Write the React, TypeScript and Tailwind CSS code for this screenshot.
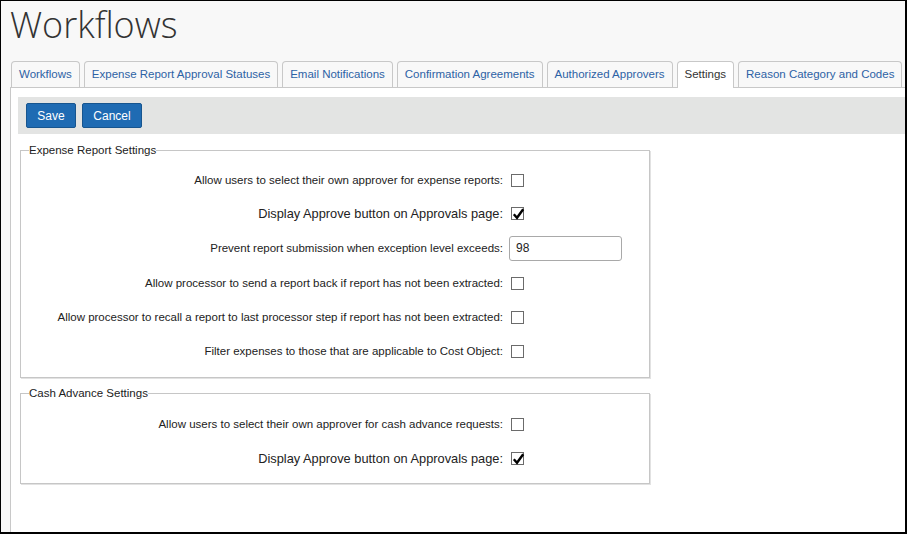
import React from "react";

const tabs = [
  "Workflows",
  "Expense Report Approval Statuses",
  "Email Notifications",
  "Confirmation Agreements",
  "Authorized Approvers",
  "Settings",
  "Reason Category and Codes",
];

function Check({ checked }: { checked?: boolean }) {
  return (
    <span className="relative inline-block w-[13px] h-[13px] border border-[#6b6b6b] bg-white">
      {checked && (
        <svg
          className="absolute left-[0px] top-[-1px]"
          width="13"
          height="14"
          viewBox="0 0 13 14"
        >
          <path d="M1.8 7.2 L5 10.8 L11.2 2.3" fill="none" stroke="#000" strokeWidth="2.4" />
        </svg>
      )}
    </span>
  );
}

function Row({
  label,
  h,
  big,
  children,
}: {
  label: string;
  h: string;
  big?: boolean;
  children: React.ReactNode;
}) {
  return (
    <div className={`flex items-center ${h}`}>
      <div
        className={
          big
            ? "w-[482px] text-right text-[12.8px] text-[#222] leading-[15px] whitespace-nowrap"
            : "w-[482px] text-right text-[11.5px] text-[#222] leading-[14px] whitespace-nowrap"
        }
      >
        {label}
      </div>
      {children}
    </div>
  );
}

export default function App() {
  return (
    <div
      className="w-[907px] h-[534px] border-l border-t border-r-2 border-b-2 border-black bg-[#f8f8f8] flex flex-col overflow-hidden"
      style={{ fontFamily: '"Liberation Sans", Arial, sans-serif' }}
    >
      <h1
        className="h-[52px] pl-[9px] text-[36px] leading-[47px] font-light text-[#333]"
        style={{ fontFamily: '"Open Sans", sans-serif' }}
      >
        Workflows
      </h1>
      <div className="mt-[8px] flex items-end pl-[10px] gap-[4px]">
        {tabs.map((t) => {
          const active = t === "Settings";
          return (
            <div
              key={t}
              className={
                active
                  ? "relative -mb-px h-[27px] px-[7px] pb-[1px] shrink-0 whitespace-nowrap flex items-center border border-b-0 border-[#c8c8c8] rounded-t-[4px] bg-white text-[11.5px] text-[#333]"
                  : "h-[26px] px-[7px] shrink-0 whitespace-nowrap flex items-center border border-b-0 border-[#c8c8c8] rounded-t-[4px] bg-[#f8f8f8] text-[11.5px] text-[#2d62a5]"
              }
            >
              {t}
            </div>
          );
        })}
      </div>
      <div className="flex-1 ml-[9px] bg-white border-t border-l border-[#c8c8c8]">
        <div className="mt-[9px] ml-[7px] h-[37px] bg-[#e3e4e3] flex items-center pl-[8px] gap-[6px]">
          <button className="w-[50px] h-[25px] rounded-[2px] border border-[#17558f] bg-[#1f6bb3] text-white text-[12px]">
            Save
          </button>
          <button className="w-[60px] h-[25px] rounded-[2px] border border-[#17558f] bg-[#1f6bb3] text-white text-[12px]">
            Cancel
          </button>
        </div>

        <fieldset className="mt-[9px] ml-[9px] w-[630px] border border-[#c6c6c6] shadow-[1px_1px_0_#e2e2e2] pt-[6px] pb-[9px]">
          <legend className="ml-[8px] text-[11.5px] leading-[14px] text-[#222]">Expense Report Settings</legend>
          <Row label="Allow users to select their own approver for expense reports:" h="h-[34px]">
            <span className="ml-[8px] flex"><Check /></span>
          </Row>
          <Row label="Display Approve button on Approvals page:" h="h-[33px]" big>
            <span className="ml-[8px] flex"><Check checked /></span>
          </Row>
          <Row label="Prevent report submission when exception level exceeds:" h="h-[36px]">
            <input
              readOnly
              value="98"
              className="ml-[6px] w-[113px] h-[25px] border border-[#a9a9a9] rounded-[3px] px-[6px] text-[12px] text-[#222] outline-none"
            />
          </Row>
          <Row label="Allow processor to send a report back if report has not been extracted:" h="h-[34px]">
            <span className="ml-[8px] flex"><Check /></span>
          </Row>
          <Row label="Allow processor to recall a report to last processor step if report has not been extracted:" h="h-[34px]">
            <span className="ml-[8px] flex"><Check /></span>
          </Row>
          <Row label="Filter expenses to those that are applicable to Cost Object:" h="h-[34px]">
            <span className="ml-[8px] flex"><Check /></span>
          </Row>
        </fieldset>

        <fieldset className="mt-[8px] ml-[9px] w-[630px] border border-[#c6c6c6] shadow-[1px_1px_0_#e2e2e2] pt-[7px] pb-[8px]">
          <legend className="ml-[8px] text-[11.5px] leading-[14px] text-[#222]">Cash Advance Settings</legend>
          <Row label="Allow users to select their own approver for cash advance requests:" h="h-[34px]">
            <span className="ml-[8px] flex"><Check /></span>
          </Row>
          <Row label="Display Approve button on Approvals page:" h="h-[34px]" big>
            <span className="ml-[8px] flex"><Check checked /></span>
          </Row>
        </fieldset>
      </div>
    </div>
  );
}
